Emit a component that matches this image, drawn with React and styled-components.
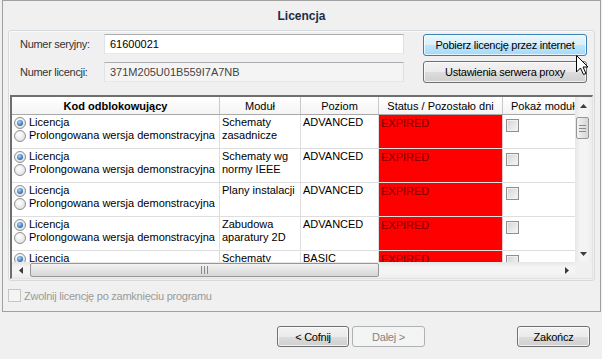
import React from 'react'
import styled, { createGlobalStyle } from 'styled-components'

const GlobalStyle = createGlobalStyle`
	html, body {
		margin: 0;
		padding: 0;
		background: #f0f0f0;
	}
	body {
		font-family: "Liberation Sans", Arial, sans-serif;
		font-size: 11px;
		color: #000;
	}
`

const rows = [
	{ module: ['Schematy', 'zasadnicze'], level: 'ADVANCED' },
	{ module: ['Schematy wg', 'normy IEEE'], level: 'ADVANCED' },
	{ module: ['Plany instalacji'], level: 'ADVANCED' },
	{ module: ['Zabudowa', 'aparatury 2D'], level: 'ADVANCED' },
	{ module: ['Schematy'], level: 'BASIC' },
]

const columns = ['Kod odblokowujący', 'Moduł', 'Poziom', 'Status / Pozostało dni', 'Pokaż moduł']

const Arrow = ({ dir }) => {
	const pts = {
		up: '0,4 3.5,0 7,4',
		down: '0,0 7,0 3.5,4',
		left: '4,0 4,7 0,3.5',
		right: '0,0 0,7 4,3.5',
	}[dir]
	const vertical = dir === 'up' || dir === 'down'
	return (
		<svg width={vertical ? 7 : 4} height={vertical ? 4 : 7} viewBox={vertical ? '0 0 7 4' : '0 0 4 7'}>
			<polygon points={pts} fill='#3b3b3b' />
		</svg>
	)
}

const Grip = ({ vertical }) =>
	vertical ? (
		<svg width='7' height='7' viewBox='0 0 7 7'>
			{[0, 3, 6].map(y => (
				<rect key={y} x='0' y={y} width='7' height='1' fill='#8a8a8a' />
			))}
		</svg>
	) : (
		<svg width='7' height='8' viewBox='0 0 7 8'>
			{[0, 3, 6].map(x => (
				<rect key={x} x={x} y='0' width='1' height='8' fill='#8a8a8a' />
			))}
		</svg>
	)

const Cursor = () => (
	<CursorWrap>
		<svg width='13' height='21' viewBox='0 0 13 21'>
			<path
				d='M0.5 0.5 L0.5 17 L4.5 13 L7.5 19.5 L10 18.5 L7 12 L12 12 Z'
				fill='#fff'
				stroke='#000'
				strokeWidth='1'
				strokeLinejoin='miter'
			/>
		</svg>
	</CursorWrap>
)

export default function App() {
	return (
		<>
			<GlobalStyle />
			<Window>
				<Panel>
					<Title>Licencja</Title>
					<Group>
						<Form>
							<FieldCol>
								<FieldRow>
									<Label>Numer seryjny:</Label>
									<TextBox>61600021</TextBox>
								</FieldRow>
								<FieldRow>
									<Label>Numer licencji:</Label>
									<TextBox $readOnly>371M205U01B559I7A7NB</TextBox>
								</FieldRow>
							</FieldCol>
							<ButtonCol>
								<Button $hover $height='22px'>
									Pobierz licencję przez internet
								</Button>
								<Button $height='22px'>Ustawienia serwera proxy</Button>
							</ButtonCol>
						</Form>
						<Table>
							<Viewport>
								<Grid>
									<HeaderRow>
										{columns.map((c, i) => (
											<HeaderCell key={c} $bold={i === 0} $last={i === 4}>
												{c}
											</HeaderCell>
										))}
									</HeaderRow>
									{rows.map((r, i) => (
										<DataRow key={i}>
											<Cell>
												<RadioLine>
													<Radio $checked />
													Licencja
												</RadioLine>
												<RadioLine>
													<Radio />
													Prolongowana wersja demonstracyjna
												</RadioLine>
											</Cell>
											<Cell>
												{r.module.map(m => (
													<Line key={m}>{m}</Line>
												))}
											</Cell>
											<Cell>
												<Line>{r.level}</Line>
											</Cell>
											<StatusCell>
												<Line>EXPIRED</Line>
											</StatusCell>
											<CheckCell>
												<CheckBox />
											</CheckCell>
										</DataRow>
									))}
								</Grid>
							</Viewport>
							<VScroll>
								<ScrollButton $v>
									<Arrow dir='up' />
								</ScrollButton>
								<VThumb>
									<Grip vertical />
								</VThumb>
								<ScrollButton $v $end>
									<Arrow dir='down' />
								</ScrollButton>
							</VScroll>
							<HScroll>
								<ScrollButton>
									<Arrow dir='left' />
								</ScrollButton>
								<HThumb>
									<Grip />
								</HThumb>
								<ScrollButton $end>
									<Arrow dir='right' />
								</ScrollButton>
							</HScroll>
							<Corner />
						</Table>
					</Group>
					<ReleaseRow>
						<CheckBox $disabled />
						Zwolnij licencję po zamknięciu programu
					</ReleaseRow>
				</Panel>
				<Footer>
					<NavGroup>
						<Button $height='21px' $width='72px'>
							&lt; Cofnij
						</Button>
						<Button $height='21px' $width='73px' $disabled>
							Dalej &gt;
						</Button>
					</NavGroup>
					<Button $height='21px' $width='73px'>
						Zakończ
					</Button>
				</Footer>
				<Cursor />
			</Window>
		</>
	)
}

const Window = styled.div`
	position: relative;
	width: 602px;
	height: 359px;
	background: #f0f0f0;
	overflow: hidden;
`

const Panel = styled.div`
	display: flex;
	flex-direction: column;
	box-sizing: border-box;
	height: 312px;
	margin: 0 1px 0 2px;
	border: 1px solid #a0a0a0;
`

const Title = styled.div`
	display: flex;
	align-items: center;
	justify-content: center;
	height: 29px;
	font-size: 12px;
	font-weight: bold;
	color: #1e2d45;
`

const Group = styled.div`
	box-sizing: border-box;
	height: 251px;
	margin: 0 5px;
	padding-bottom: 1px;
	border: 1px solid #d5dadf;
	border-radius: 3px;
	box-shadow: inset 1px 1px 0 #fafafa;
`

const Form = styled.div`
	display: flex;
	gap: 19px;
	box-sizing: border-box;
	height: 64px;
	padding: 3px 0 0 11px;
`

const FieldCol = styled.div`
	display: flex;
	flex-direction: column;
	gap: 8px;
`

const FieldRow = styled.div`
	display: flex;
	align-items: center;
	height: 20px;
`

const Label = styled.span`
	width: 84px;
	color: #333;
	letter-spacing: -0.3px;
`

const TextBox = styled.div`
	display: flex;
	align-items: center;
	box-sizing: border-box;
	width: 300px;
	height: 20px;
	padding-left: 5px;
	border: 1px solid;
	border-color: #abadb3 #dbdfe6 #e3e9ef #e2e3ea;
	background: ${({ $readOnly }) => ($readOnly ? '#f4f4f4' : '#fff')};
	color: ${({ $readOnly }) => ($readOnly ? '#444' : '#000')};
`

const ButtonCol = styled.div`
	display: flex;
	flex-direction: column;
	gap: 5px;
	width: 164px;
`

const Button = styled.div`
	display: flex;
	align-items: center;
	justify-content: center;
	box-sizing: border-box;
	width: ${({ $width }) => $width || '100%'};
	height: ${({ $height }) => $height};
	border: 1px solid ${({ $hover, $disabled }) => ($hover ? '#3c7fb1' : $disabled ? '#adb2b5' : '#707070')};
	border-radius: 3px;
	letter-spacing: -0.25px;
	color: ${({ $disabled }) => ($disabled ? '#838383' : '#000')};
	background: ${({ $hover, $disabled }) =>
		$hover
			? 'linear-gradient(#eaf6fd 0%, #d9f0fc 50%, #bee6fd 50%, #a7d9f5 100%)'
			: $disabled
				? '#f4f4f4'
				: 'linear-gradient(#f2f2f2 0%, #ebebeb 50%, #dddddd 50%, #cfcfcf 100%)'};
	box-shadow: inset 0 0 0 1px ${({ $disabled }) => ($disabled ? '#f4f4f4' : 'rgba(255,255,255,0.7)')};
`

const Table = styled.div`
	display: grid;
	grid-template-columns: 563px 17px;
	grid-template-rows: 165px 16px;
	box-sizing: border-box;
	width: 583px;
	height: 184px;
	margin-left: 1px;
	border-style: solid;
	border-width: 2px 1px 1px 2px;
	border-color: #6e6e6e #e3e3e3 #e3e3e3 #6e6e6e;
	background: #fff;
`

const Viewport = styled.div`
	overflow: hidden;
	background: #fff;
`

const Grid = styled.div`
	width: 600px;
`

const colTemplate = '208px 81px 78px 124px 100px'

const HeaderRow = styled.div`
	display: grid;
	grid-template-columns: ${colTemplate};
	box-sizing: border-box;
	height: 18px;
	border-bottom: 1px solid #a8a8a8;
	background: linear-gradient(#ffffff, #f4f4f4);
`

const HeaderCell = styled.div`
	display: flex;
	align-items: center;
	justify-content: ${({ $last }) => ($last ? 'flex-start' : 'center')};
	padding-left: ${({ $last }) => ($last ? '8px' : '0')};
	border-right: 1px solid #c9c9c9;
	font-weight: ${({ $bold }) => ($bold ? 'bold' : 'normal')};
	white-space: nowrap;
	overflow: hidden;
`

const DataRow = styled.div`
	display: grid;
	grid-template-columns: ${colTemplate};
	box-sizing: border-box;
	height: 34px;
	border-bottom: 1px solid #dedede;
`

const Cell = styled.div`
	padding: 1px 2px 0;
	border-right: 1px solid #dedede;
	line-height: 13px;
	white-space: nowrap;
	overflow: hidden;
`

const StatusCell = styled(Cell)`
	padding-top: 2px;
	background: #ff0000;
	color: #7a0000;
	border-right-color: #f0c8c8;
`

const CheckCell = styled.div`
	padding: 4px 0 0 3px;
`

const Line = styled.div`
	height: 13px;
`

const RadioLine = styled.div`
	display: flex;
	align-items: center;
	gap: 3px;
	height: 13px;
`

const Radio = styled.span`
	position: relative;
	flex: none;
	box-sizing: border-box;
	width: 12px;
	height: 12px;
	border: 1px solid #8e8f8f;
	border-radius: 50%;
	background: radial-gradient(circle at 40% 35%, #ffffff, #d9d9d9);
	&::after {
		content: '';
		display: ${({ $checked }) => ($checked ? 'block' : 'none')};
		position: absolute;
		left: 2px;
		top: 2px;
		width: 6px;
		height: 6px;
		border-radius: 50%;
		background: radial-gradient(circle at 40% 35%, #a9d6fa, #2a64ad 75%);
	}
`

const CheckBox = styled.span`
	flex: none;
	display: inline-block;
	box-sizing: border-box;
	width: 13px;
	height: 13px;
	border: 1px solid ${({ $disabled }) => ($disabled ? '#c6c6c6' : '#8f8f8f')};
	background: ${({ $disabled }) =>
		$disabled ? '#f4f4f4' : 'linear-gradient(135deg, #d4d4d4, #f7f7f7)'};
	box-shadow: inset 0 0 0 1px ${({ $disabled }) => ($disabled ? '#f4f4f4' : '#f0f0f0')};
`

const VScroll = styled.div`
	display: flex;
	flex-direction: column;
	background: linear-gradient(to right, #e6e6e6, #f4f4f4 30%, #f4f4f4 70%, #ececec);
`

const HScroll = styled.div`
	display: flex;
	align-items: flex-start;
	background: linear-gradient(#e6e6e6, #f4f4f4 30%, #f4f4f4 70%, #ececec);
`

const Corner = styled.div`
	background: #f0f0f0;
`

const ScrollButton = styled.div`
	display: flex;
	align-items: center;
	justify-content: center;
	flex: none;
	width: ${({ $v }) => ($v ? '100%' : '17px')};
	height: ${({ $v }) => ($v ? '17px' : '16px')};
	margin-${({ $v }) => ($v ? 'top' : 'left')}: ${({ $end }) => ($end ? 'auto' : '0')};
`

const VThumb = styled.div`
	display: flex;
	align-items: center;
	justify-content: center;
	box-sizing: border-box;
	height: 22px;
	margin: 3px 3px 0 1px;
	border: 1px solid #979797;
	border-radius: 2px;
	background: linear-gradient(to right, #f3f3f3, #e4e4e4 50%, #d6d6d6);
`

const HThumb = styled.div`
	display: flex;
	align-items: center;
	justify-content: center;
	box-sizing: border-box;
	width: 349px;
	height: 14px;
	margin: 1px 0 0 1px;
	border: 1px solid #979797;
	border-radius: 2px;
	background: linear-gradient(#f3f3f3, #e4e4e4 50%, #d6d6d6);
`

const ReleaseRow = styled.div`
	display: flex;
	align-items: center;
	gap: 3px;
	padding: 8px 0 0 5px;
	color: #9a9a9a;
	letter-spacing: -0.25px;
`

const Footer = styled.div`
	display: flex;
	justify-content: flex-end;
	align-items: flex-start;
	padding: 14px 12px 0 0;
`

const NavGroup = styled.div`
	display: flex;
	gap: 3px;
	margin-right: 92px;
`

const CursorWrap = styled.div`
	position: absolute;
	left: 576px;
	top: 55px;
	line-height: 0;
`
